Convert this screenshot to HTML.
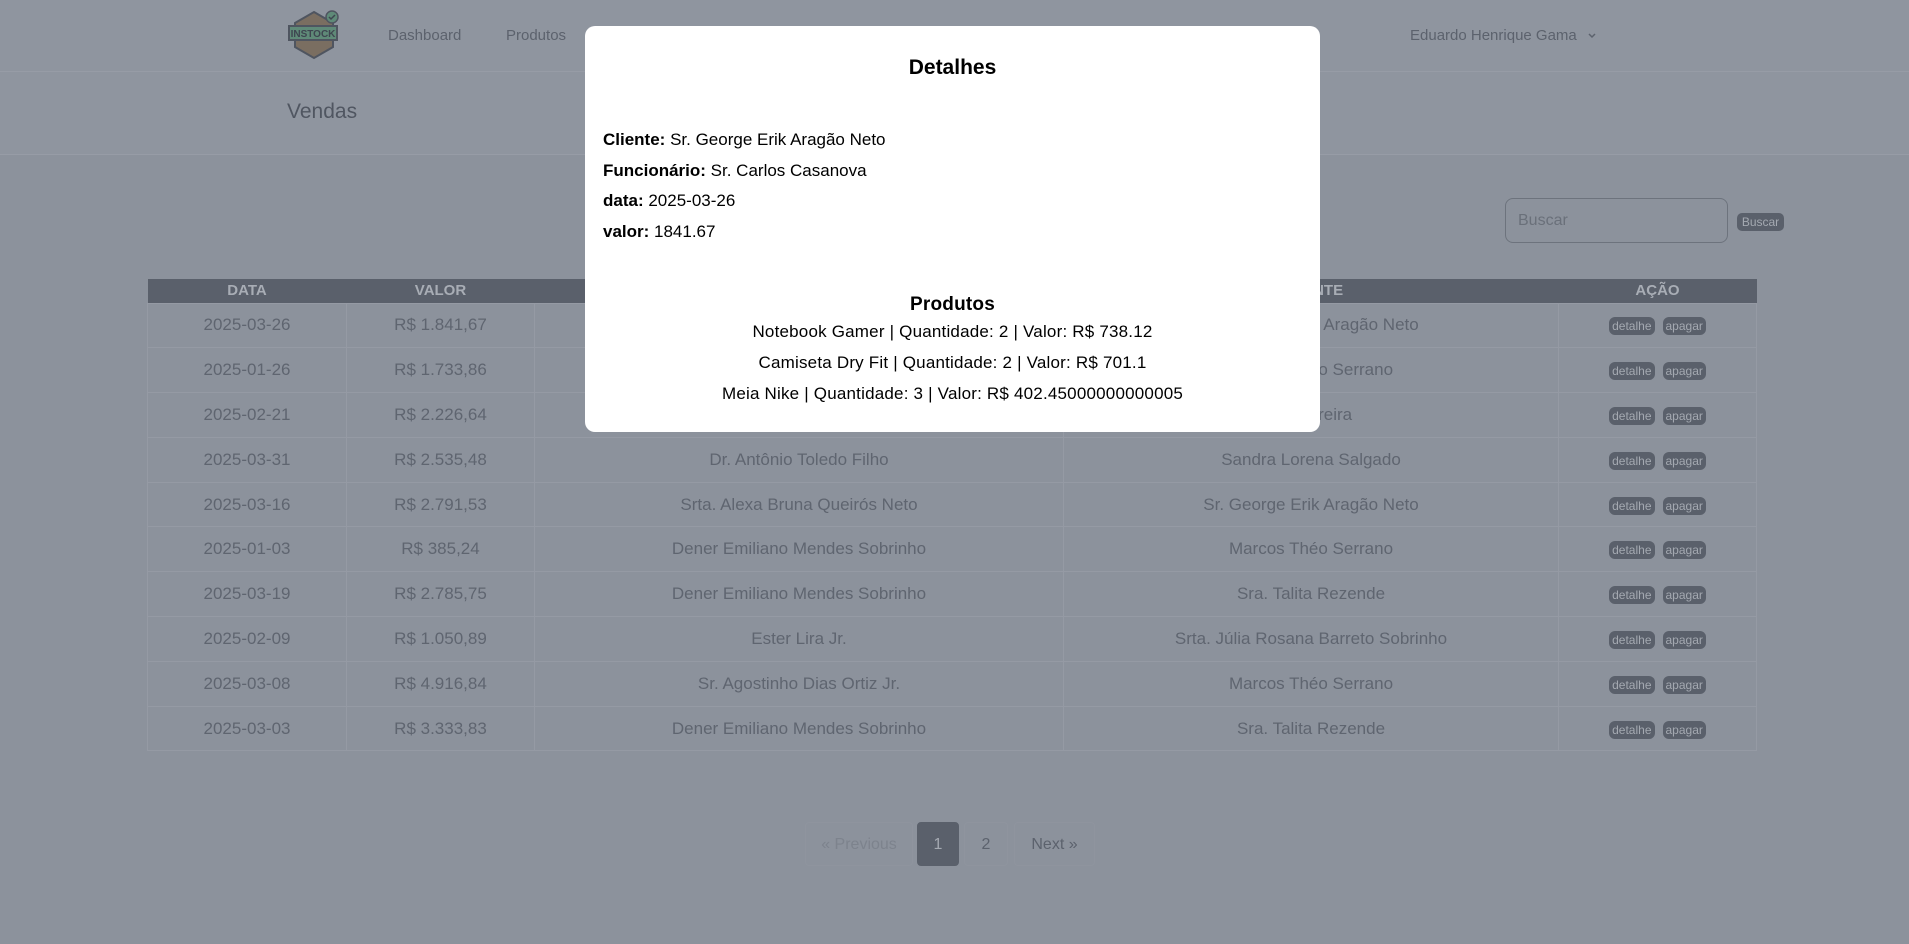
<!DOCTYPE html>
<html><head><meta charset="utf-8"><style>
*{box-sizing:border-box;margin:0;padding:0}
body{width:1909px;height:944px;background:#8c929c;font-family:"Liberation Sans",sans-serif;position:relative;overflow:hidden;color:#5c626d}
.nav{position:absolute;left:0;top:0;width:1909px;height:72px;background:#8f959f;border-bottom:1px solid #979ca6}
.nav a{position:absolute;top:27px;font-size:15px;color:#5c626d}
.hdr{position:absolute;left:0;top:72px;width:1909px;height:83px;background:#8f959f;border-bottom:1px solid #979ca6}
.hdr h1{position:absolute;left:287px;top:28px;font-size:21px;font-weight:normal;color:#505661}
.search{position:absolute;left:1505px;top:198px;width:223px;height:45px;border:1px solid #6d737d;border-radius:8px;font-size:16px;color:#6a707a;padding:13px 12px}
.sbtn{position:absolute;left:1737px;top:213px;width:47px;height:18px;background:#5a606b;border-radius:5px;font-size:12px;color:#a4a9b1;text-align:center;line-height:18px}
table{position:absolute;left:147px;top:279px;width:1610px;border-collapse:collapse}
th{background:#5a606b;color:#a8adb5;font-size:15px;height:24px;font-weight:bold}
td{height:44.8px;border:1px solid #959aa4;text-align:center;font-size:17px;color:#5f6570}
.b{display:inline-block;background:#5a606b;color:#a4a9b1;font-size:12px;border-radius:6px;padding:2px 3px;margin:0 4px}
.pg{position:absolute;top:822px;height:44px;font-size:16px;line-height:44px;text-align:center;border:1px solid #8f949e;border-radius:4px}
.modal{position:absolute;left:585px;top:26px;width:735px;height:406px;background:#fff;border-radius:10px;color:#000}
.modal h2{position:absolute;width:100%;top:30px;text-align:center;font-size:21px;font-weight:bold}
.modal p{position:absolute;left:18px;font-size:17px}
.modal .c{left:0;width:100%;text-align:center;letter-spacing:0.2px}
</style></head><body>
<div class="nav">
<svg style="position:absolute;left:287px;top:9px" width="54" height="52" viewBox="0 0 54 52"><polygon points="27,3 46,14 46,38 27,49 8,38 8,14" fill="#7a6e61" stroke="#4f5560" stroke-width="2"/><rect x="2" y="17" width="48" height="14" fill="#5f8a78" stroke="#4f5560" stroke-width="2"/><text x="26" y="28" font-size="10" font-weight="bold" fill="#3e4650" text-anchor="middle" font-family="Liberation Sans">INSTOCK</text><circle cx="45" cy="8" r="6" fill="#5f8a78" stroke="#4f5560" stroke-width="1.5"/><path d="M42 8l2 2 4-4" stroke="#3e4650" stroke-width="1.5" fill="none"/></svg>
<a style="left:388px">Dashboard</a><a style="left:506px">Produtos</a>
<a style="left:1410px">Eduardo Henrique Gama <svg width="10" height="8" viewBox="0 0 10 8" style="margin-left:6px"><path d="M2 2l3 3 3-3" stroke="#5c626d" stroke-width="1.5" fill="none"/></svg></a>
</div>
<div class="hdr"><h1>Vendas</h1></div>
<div class="search">Buscar</div><div class="sbtn">Buscar</div>
<table>
<tr><th style="width:199px">DATA</th><th style="width:188px">VALOR</th><th style="width:529px">CLIENTE</th><th style="width:495px">CLIENTE</th><th>AÇÃO</th></tr>
<tr><td>2025-03-26</td><td>R$ 1.841,67</td><td></td><td>Sr. George Erik Aragão Neto</td><td><span class="b">detalhe</span><span class="b">apagar</span></td></tr>
<tr><td>2025-01-26</td><td>R$ 1.733,86</td><td></td><td>Marcos Théo Serrano</td><td><span class="b">detalhe</span><span class="b">apagar</span></td></tr>
<tr><td>2025-02-21</td><td>R$ 2.226,64</td><td></td><td>Lia Pereira</td><td><span class="b">detalhe</span><span class="b">apagar</span></td></tr>
<tr><td>2025-03-31</td><td>R$ 2.535,48</td><td>Dr. Antônio Toledo Filho</td><td>Sandra Lorena Salgado</td><td><span class="b">detalhe</span><span class="b">apagar</span></td></tr>
<tr><td>2025-03-16</td><td>R$ 2.791,53</td><td>Srta. Alexa Bruna Queirós Neto</td><td>Sr. George Erik Aragão Neto</td><td><span class="b">detalhe</span><span class="b">apagar</span></td></tr>
<tr><td>2025-01-03</td><td>R$ 385,24</td><td>Dener Emiliano Mendes Sobrinho</td><td>Marcos Théo Serrano</td><td><span class="b">detalhe</span><span class="b">apagar</span></td></tr>
<tr><td>2025-03-19</td><td>R$ 2.785,75</td><td>Dener Emiliano Mendes Sobrinho</td><td>Sra. Talita Rezende</td><td><span class="b">detalhe</span><span class="b">apagar</span></td></tr>
<tr><td>2025-02-09</td><td>R$ 1.050,89</td><td>Ester Lira Jr.</td><td>Srta. Júlia Rosana Barreto Sobrinho</td><td><span class="b">detalhe</span><span class="b">apagar</span></td></tr>
<tr><td>2025-03-08</td><td>R$ 4.916,84</td><td>Sr. Agostinho Dias Ortiz Jr.</td><td>Marcos Théo Serrano</td><td><span class="b">detalhe</span><span class="b">apagar</span></td></tr>
<tr><td>2025-03-03</td><td>R$ 3.333,83</td><td>Dener Emiliano Mendes Sobrinho</td><td>Sra. Talita Rezende</td><td><span class="b">detalhe</span><span class="b">apagar</span></td></tr>
</table>
<div class="pg" style="left:805px;width:108px;color:#7d838d">« Previous</div>
<div class="pg" style="left:917px;width:42px;background:#5a606b;border-color:#5a606b;color:#a4a9b1">1</div>
<div class="pg" style="left:964px;width:44px">2</div>
<div class="pg" style="left:1014px;width:81px">Next »</div>
<div class="modal">
<h2>Detalhes</h2>
<p style="top:104px"><b>Cliente:</b> Sr. George Erik Aragão Neto</p>
<p style="top:135px"><b>Funcionário:</b> Sr. Carlos Casanova</p>
<p style="top:165px"><b>data:</b> 2025-03-26</p>
<p style="top:196px"><b>valor:</b> 1841.67</p>
<p class="c" style="top:268px;font-size:19px;font-weight:bold">Produtos</p>
<p class="c" style="top:296px">Notebook Gamer | Quantidade: 2 | Valor: R$ 738.12</p>
<p class="c" style="top:327px">Camiseta Dry Fit | Quantidade: 2 | Valor: R$ 701.1</p>
<p class="c" style="top:358px">Meia Nike | Quantidade: 3 | Valor: R$ 402.45000000000005</p>
</div>
</body></html>
